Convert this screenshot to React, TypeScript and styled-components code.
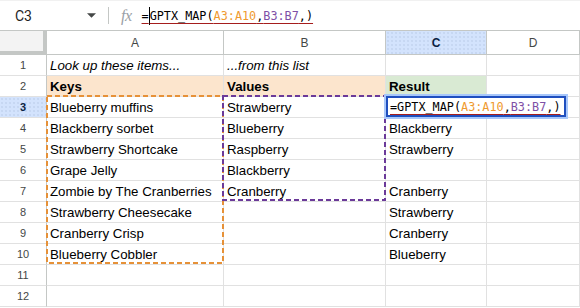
import styled, { createGlobalStyle } from 'styled-components'

// column widths, px (row header, A, B, C); D takes the rest
const COL_W = [47, 177, 162, 101]
const HEAD_H = 24
const ROW_H = 21

const GlobalStyle = createGlobalStyle`
  html, body { margin: 0; padding: 0; background: #fff; }
  body { font-family: 'Liberation Sans', Arial, sans-serif; overflow: hidden; }
`

type Cell = { text?: string; kind?: 'italic' | 'key' | 'result' }

const rows: Cell[][] = [
  [{ text: 'Look up these items...', kind: 'italic' }, { text: '...from this list', kind: 'italic' }, {}, {}],
  [{ text: 'Keys', kind: 'key' }, { text: 'Values', kind: 'key' }, { text: 'Result', kind: 'result' }, {}],
  [{ text: 'Blueberry muffins' }, { text: 'Strawberry' }, {}, {}],
  [{ text: 'Blackberry sorbet' }, { text: 'Blueberry' }, { text: 'Blackberry' }, {}],
  [{ text: 'Strawberry Shortcake' }, { text: 'Raspberry' }, { text: 'Strawberry' }, {}],
  [{ text: 'Grape Jelly' }, { text: 'Blackberry' }, {}, {}],
  [{ text: 'Zombie by The Cranberries' }, { text: 'Cranberry' }, { text: 'Cranberry' }, {}],
  [{ text: 'Strawberry Cheesecake' }, {}, { text: 'Strawberry' }, {}],
  [{ text: 'Cranberry Crisp' }, {}, { text: 'Cranberry' }, {}],
  [{ text: 'Blueberry Cobbler' }, {}, { text: 'Blueberry' }, {}],
  [{}, {}, {}, {}],
  [{}, {}, {}, {}],
]

const ORANGE = '#e69138'
const PURPLE = '#6b3a99'

function Formula() {
  return (
    <>
      =GPTX_MAP(<RefA>A3:A10</RefA>,<RefB>B3:B7</RefB>,)
    </>
  )
}

// x of a column's left edge
const colX = (i: number) => COL_W.slice(0, i).reduce((a, b) => a + b, 0)
const rowY = (r: number) => HEAD_H + ROW_H * (r - 1)

export default function App() {
  return (
    <Page>
      <GlobalStyle />
      <FormulaBar>
        <NameBox>
          <span>C3</span>
          <Caret viewBox="0 0 10 5">
            <path d="M0 0 L10 0 L5 5 Z" fill="#444746" />
          </Caret>
        </NameBox>
        <Divider />
        <Fx>fx</Fx>
        <FormulaText>
          <Underlined>
            =<Cursor />GPTX_MAP(<RefA>A3:A10</RefA>,<RefB>B3:B7</RefB>,)
          </Underlined>
        </FormulaText>
      </FormulaBar>

      <Sheet>
        <Corner />
        {['A', 'B', 'C', 'D'].map((l) => (
          <ColHead key={l} $active={l === 'C'}>{l}</ColHead>
        ))}
        {rows.map((cells, r) => (
          <Row key={r} cells={cells} n={r + 1} />
        ))}

        <Range
          style={{ left: colX(1) - 1, top: rowY(3) - 2, width: COL_W[1] + 1, height: ROW_H * 8 + 1 }}
        >
          <svg width="100%" height="100%">
            <rect x="1" y="1" width="calc(100% - 2px)" height="calc(100% - 2px)" fill="none"
              stroke={ORANGE} strokeWidth="2" strokeDasharray="5 3" />
          </svg>
        </Range>
        <Range
          style={{ left: colX(2) - 2, top: rowY(3) - 2, width: COL_W[2] + 2, height: ROW_H * 5 + 1 }}
        >
          <svg width="100%" height="100%">
            <rect x="1" y="1" width="calc(100% - 2px)" height="calc(100% - 2px)" fill="none"
              stroke={PURPLE} strokeWidth="2" strokeDasharray="5 3" />
          </svg>
        </Range>

        <Editor style={{ left: colX(3) - 2, top: rowY(3) - 3 }}>
          <Underlined>
            <Formula />
          </Underlined>
        </Editor>
      </Sheet>
    </Page>
  )
}

function Row({ cells, n }: { cells: Cell[]; n: number }) {
  return (
    <>
      <RowHead $active={n === 3}>{n}</RowHead>
      {cells.map((c, i) => (
        <DataCell key={i} $kind={c.kind}>{c.text}</DataCell>
      ))}
    </>
  )
}

// ------------------ STYLING ------------------

const Page = styled.div`
  width: 580px;
  height: 308px;
  overflow: hidden;
  background: #fff;
  color: #000;
`

const FormulaBar = styled.div`
  display: flex;
  align-items: center;
  border-top: 1px solid #f1f1f1;
  border-bottom: 1px solid #c4c7c5;
  box-sizing: border-box;
  height: 31px;
`

const NameBox = styled.div`
  width: 108px;
  box-sizing: border-box;
  padding: 0 12px 0 15px;
  display: flex;
  align-items: center;
  justify-content: space-between;
  font-family: Roboto, 'Liberation Sans', sans-serif;
  font-size: 14px;
  color: #1f1f1f;
`

const Caret = styled.svg`
  width: 9px;
  height: 5px;
`

const Divider = styled.div`
  width: 1px;
  height: 17px;
  background: #c4c7c5;
`

const Fx = styled.div`
  margin: 0 10px 0 12px;
  font-family: 'Liberation Serif', serif;
  font-style: italic;
  font-size: 16px;
  color: #9aa0a6;
  letter-spacing: -0.5px;
`

const FormulaText = styled.div`
  font-family: 'DejaVu Sans Mono', monospace;
  font-size: 11.8px;
  color: #000;
  padding-top: 1px;
`

const Underlined = styled.span`
  text-decoration: underline;
  text-decoration-color: #a51d1d;
  text-underline-offset: 3px;
  text-decoration-thickness: 1px;
  white-space: nowrap;
`

const Cursor = styled.span`
  display: inline-block;
  width: 0;
  height: 18px;
  border-left: 1px solid #000;
  vertical-align: -5px;
`

const RefA = styled.span`
  color: #ef9a2f;
`

const RefB = styled.span`
  color: #7e4fa6;
`

const Sheet = styled.div`
  position: relative;
  display: grid;
  grid-template-columns: ${COL_W.map((w) => `${w}px`).join(' ')} 1fr;
  grid-template-rows: ${HEAD_H}px;
  grid-auto-rows: ${ROW_H}px;
`

const dots = `
  background-image: radial-gradient(rgba(70, 90, 140, 0.14) 0.6px, transparent 0.9px);
  background-size: 4px 4px;
`

const Corner = styled.div`
  box-sizing: border-box;
  background: #f3f3f3;
  border-right: 4px solid #c4c7c5;
  border-bottom: 4px solid #c4c7c5;
`

const ColHead = styled.div<{ $active?: boolean }>`
  box-sizing: border-box;
  display: flex;
  align-items: center;
  justify-content: center;
  border-right: 1px solid #c4c7c5;
  border-bottom: 1px solid #c4c7c5;
  font-family: 'Liberation Sans', Arial, sans-serif;
  font-size: 12px;
  color: ${(p) => (p.$active ? '#0b1f44' : '#444746')};
  font-weight: ${(p) => (p.$active ? 700 : 400)};
  background-color: ${(p) => (p.$active ? '#d3e3fd' : '#fff')};
  ${(p) => (p.$active ? dots : '')}
`

const RowHead = styled.div<{ $active?: boolean }>`
  box-sizing: border-box;
  display: flex;
  align-items: center;
  justify-content: center;
  border-right: 1px solid #c4c7c5;
  border-bottom: 1px solid #e1e1e1;
  font-family: 'Liberation Sans', Arial, sans-serif;
  font-size: 11px;
  color: ${(p) => (p.$active ? '#0b1f44' : '#444746')};
  font-weight: ${(p) => (p.$active ? 700 : 400)};
  background-color: ${(p) => (p.$active ? '#d3e3fd' : '#fff')};
  ${(p) => (p.$active ? dots : '')}
`

const DataCell = styled.div<{ $kind?: 'italic' | 'key' | 'result' }>`
  box-sizing: border-box;
  display: flex;
  align-items: center;
  padding: 0 3px;
  border-right: 1px solid #e1e1e1;
  border-bottom: 1px solid #e1e1e1;
  font-family: 'Liberation Sans', Arial, sans-serif;
  font-size: 13.3px;
  white-space: nowrap;
  overflow: hidden;
  color: #000;
  font-style: ${(p) => (p.$kind === 'italic' ? 'italic' : 'normal')};
  font-weight: ${(p) => (p.$kind === 'key' || p.$kind === 'result' ? 700 : 400)};
  background: ${(p) =>
    p.$kind === 'key' ? '#fce5cd' : p.$kind === 'result' ? '#d9ead3' : '#fff'};
`

const Range = styled.div`
  position: absolute;
  pointer-events: none;
  svg { display: block; }
`

const Editor = styled.div`
  position: absolute;
  box-sizing: border-box;
  display: flex;
  align-items: center;
  padding: 0 3px 0 2px;
  background: #fff;
  border: 2px solid #1f4fbf;
  box-shadow: 0 0 0 2px #a8c7fa;
  margin-left: 2px;
  margin-top: 2px;
  height: 21px;
  font-family: 'DejaVu Sans Mono', monospace;
  font-size: 11.8px;
  color: #000;
`
